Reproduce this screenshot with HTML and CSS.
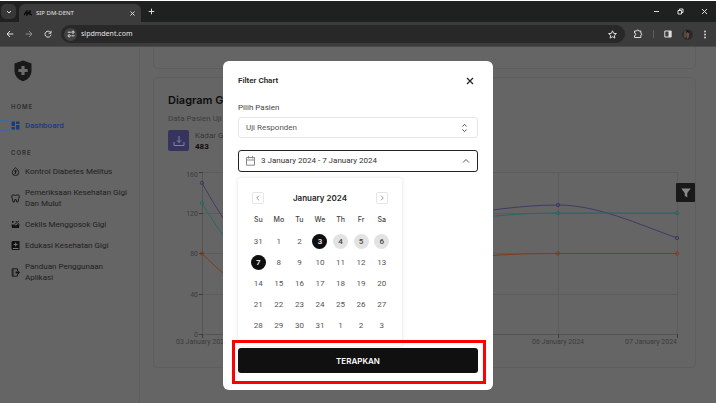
FILE: index.html
```html
<!DOCTYPE html>
<html lang="id">
<head>
<meta charset="utf-8">
<title>SIP DM-DENT</title>
<link rel="stylesheet" href="styles.css">
</head>
<body>
<header class="browser">
  <div class="tabbar">
    <button class="tabsearch" aria-label="Search tabs"><svg width="8" height="8" viewBox="0 0 8 8"><path d="M2 3l2 2 2-2" class="line"/></svg></button>
    <div class="tab">
      <svg class="favicon" width="8" height="6" viewBox="0 0 8 6"><path d="M0 5L3 1v4L6 1v4" fill="none" stroke="#0b0b0b" stroke-width="1.4"/><circle cx="7.3" cy="4.8" r=".7"/></svg>
      <span class="tabtitle">SIP DM-DENT</span>
      <button class="plain" aria-label="Close tab"><svg width="7" height="7" viewBox="0 0 7 7"><path d="M1.5 1.5l4 4m0-4l-4 4" class="line"/></svg></button>
    </div>
    <button class="plain newtab" aria-label="New tab"><svg width="7" height="7" viewBox="0 0 7 7"><path d="M3.5 .7v5.6M.7 3.5h5.6" class="line"/></svg></button>
    <div class="window">
      <button class="plain" aria-label="Minimize"><svg width="7" height="7" viewBox="0 0 7 7"><path d="M1 3.5h5" class="line"/></svg></button>
      <button class="plain" aria-label="Restore"><svg width="7" height="7" viewBox="0 0 7 7"><path d="M1 2.5h3.5V6H1zM2.5 2.5V1H6v3.5H4.5" class="line"/></svg></button>
      <button class="plain" aria-label="Close window"><svg width="7" height="7" viewBox="0 0 7 7"><path d="M1 1l5 5m0-5L1 6" class="line"/></svg></button>
    </div>
  </div>
  <div class="toolbar">
    <button class="plain" aria-label="Back"><svg width="8" height="8" viewBox="0 0 8 8"><path d="M7.3 4H1m3-3L1 4l3 3" class="line"/></svg></button>
    <button class="plain dim" aria-label="Forward"><svg width="8" height="8" viewBox="0 0 8 8"><path d="M.7 4H7M4 1l3 3-3 3" class="line"/></svg></button>
    <button class="plain" aria-label="Reload"><svg width="8" height="8" viewBox="0 0 8 8"><path d="M6.6 2.6A3 3 0 1 0 7 4.6M7 .8v2.4H4.6" class="line"/></svg></button>
    <label class="address">
      <span class="site"><svg width="8" height="8" viewBox="0 0 8 8"><path d="M.8 2.2h3M4.5 5.8h3" class="line"/><circle cx="6" cy="2.2" r="1.1" class="line"/><circle cx="2.2" cy="5.8" r="1.1" class="line"/></svg></span>
      <input type="text" value="sipdmdent.com" aria-label="Address">
      <svg width="9" height="9" viewBox="0 0 9 9"><path d="M4.5 .8l1.1 2.5 2.8.3-2.1 1.8.6 2.7-2.4-1.4-2.4 1.4.6-2.7L.6 3.6l2.8-.3z" class="line"/></svg>
    </label>
    <div class="tools">
      <button class="plain" aria-label="Extensions"><svg width="10" height="10" viewBox="0 0 10 10"><path d="M1.5 2h2.2a1 1 0 0 1 2 0h2.1v2.2a1 1 0 0 1 0 2v2.3H1.5V6.6a1.3 1.3 0 0 0 0-2.6z" class="line"/></svg></button>
      <i class="divider"></i>
      <button class="plain" aria-label="Side panel"><svg width="8" height="8" viewBox="0 0 8 8"><path d="M.8 1h6.4v6H.8z" class="line"/><path d="M4.5 1H7v6H4.5z" fill="#ddd"/></svg></button>
      <button class="plain" aria-label="Profile"><svg width="11" height="11" viewBox="0 0 11 11"><circle cx="5.5" cy="5.5" r="5.3" fill="#29282a"/><path d="M2.3 1.5L5 2 4 9 1.5 8.400z" fill="#454f4d"/><path d="M4.500 4q1.200-2 2.500 0v3L6 9.500H5L4.500 7z" fill="#7c4a3a"/><path d="M4 4.400q1.500-2.600 3 0V2.700Q5.500 1 4 2.700z" fill="#111"/></svg></button>
      <button class="plain" aria-label="Menu"><svg width="4" height="9" viewBox="0 0 4 9" fill="#ddd"><circle cx="2" cy="1.5" r=".9"/><circle cx="2" cy="4.5" r=".9"/><circle cx="2" cy="7.5" r=".9"/></svg></button>
    </div>
  </div>
</header>

<div class="app">
  <aside class="sidebar">
    <svg class="logo" width="18" height="22" viewBox="0 0 18 22"><path d="M9 .5l8.500 3v7.200c0 5-3.400 8.800-8.500 10.600C3.900 19.500.5 15.700.5 10.700V3.500z" fill="#191919"/><path d="M7.400 6h3.200v2.900h3v3.200h-3V15H7.400v-2.900h-3V8.900h3z" fill="#6b6b6b"/></svg>
    <h2>HOME</h2>
    <nav>
      <a href="#" class="active"><svg width="9" height="9" viewBox="0 0 9 9" fill="#183b80"><path d="M.5.5h3.500v4.500H.5zM.5 6h3.500v2.500H.5zM5 .5h3.500V3H5zM5 4h3.500v4.500H5z"/></svg><span>Dashboard</span></a>
    </nav>
    <h2 class="core">CORE</h2>
    <nav>
      <a href="#"><svg width="9" height="9" viewBox="0 0 9 9"><path d="M4.500.6C3 2.300 1.300 3.600 1.300 5.400a3.200 3.200 0 0 0 6.400 0C7.700 3.600 6 2.300 4.500.6z" class="ink"/><path d="M3.200 4h2.600M4.500 3v3.800M3.400 6.700l2-1.800" class="ink"/></svg><span>Kontrol Diabetes Melitus</span></a>
      <a href="#"><svg width="9" height="9" viewBox="0 0 9 9"><path d="M1 1.200q1.800-.8 3.500.3 1.700-1.100 3.500-.3.800 1.800-.4 3.700L7 8H5.700L5.200 5.600H3.800L3.300 8H2L1.400 4.900Q.2 3 1 1.200z" class="ink"/></svg><span>Pemeriksaan Kesehatan Gigi Dan Mulut</span></a>
      <a href="#"><svg width="9" height="9" viewBox="0 0 9 9"><path d="M.5 4.500h2l2 1 4-1.500-.5 4H1z" fill="#141414"/><path d="M3.500 4.500L7.800 1M1 2h2M1.500 1v2M5 2l.5-1M8 3.500l-2 1" class="ink"/></svg><span>Ceklis Menggosok Gigi</span></a>
      <a href="#"><svg width="9" height="9" viewBox="0 0 9 9"><path d="M1.500 0h7v9h-7L.5 8V1z" fill="#111"/><path d="M4.700 1.500v4M2.700 3.500h4M1.800 7.500h5.700" stroke="#777" fill="none"/></svg><span>Edukasi Kesehatan Gigi</span></a>
      <a href="#"><svg width="9" height="9" viewBox="0 0 9 9"><path d="M6.500 3V.8H1.200v7.400h5.300V6M2 1v7" class="ink"/><path d="M4.500 3.500H7V2.500l2 2-2 2V5.500H4.500z" fill="#141414"/></svg><span>Panduan Penggunaan Aplikasi</span></a>
    </nav>
  </aside>

  <main>
    <section class="card above"></section>
    <section class="card chart">
      <h1>Diagram Gula</h1>
      <p>Data Pasien Uji</p>
      <div class="stat">
        <span class="download"><svg width="12" height="12" viewBox="0 0 12 12"><path d="M1 7v3.500h10V7M6 1v6.500M3.800 5.300L6 7.500l2.200-2.200" fill="none" stroke="#85829a"/></svg></span>
        <div>Kadar Gula<strong>483</strong></div>
      </div>
      <svg class="plot" viewBox="0 0 541 186">
        <g fill="none" stroke="#5c5c5c">
          <path d="M48 10.500h476M48 51.500h476M48 91.500h476M48 132.500h476M167.500 10v162M286.500 10v162M404.500 10v162M523.500 10v162"/>
          <path d="M48.500 10.500v162M48 172.500h476" stroke="#545454"/>
          <path d="M45 10.500h4M45 51.500h4M45 91.500h4M45 132.500h4M45 172.500h4M48.500 172v4M404.500 172v4M523.500 172v4" stroke="#3c3c3c"/>
        </g>
        <g class="axis" text-anchor="end"><text x="44" y="15">160</text><text x="44" y="54">120</text><text x="44" y="94">80</text><text x="44" y="135">40</text><text x="44" y="175">0</text></g>
        <g class="axis" text-anchor="middle"><text x="48" y="182">03 January 2024</text><text x="404" y="182">06 January 2024</text><text x="497" y="182">07 January 2024</text></g>
        <g class="series" stroke="#3f3a66"><path d="M48 21C88 92 127 140 167 120S246 60 286 55S365 43 404 43S484 62 523 76"/><circle cx="48" cy="21" r="1.700"/><circle cx="404" cy="43" r="1.700"/><circle cx="523" cy="76" r="1.700"/></g>
        <g class="series" stroke="#2b6666"><path d="M48 41C88 108 127 145 167 120S246 65 286 60S365 51 404 51H523"/><circle cx="48" cy="41" r="1.700"/><circle cx="404" cy="51" r="1.700"/><circle cx="523" cy="51" r="1.700"/></g>
        <g class="series" stroke="#7d3d1c"><path d="M48 91.500C88 131 127 160 167 150S246 105 286 99S365 91.500 404 91.500H523"/><circle cx="48" cy="91.500" r="1.700"/><circle cx="404" cy="91.500" r="1.700"/><circle cx="523" cy="91.500" r="1.700"/></g>
      </svg>
      <button class="filter" aria-label="Filter"><svg width="10" height="10" viewBox="0 0 10 10"><path d="M.3.500h9.400L6.300 5v4.500L3.700 7.800V5z" fill="#888"/></svg></button>
    </section>
  </main>
</div>

<div class="overlay">
  <form class="dialog" role="dialog" aria-labelledby="dialog-title">
    <div class="head">
      <h2 id="dialog-title">Filter Chart</h2>
      <button type="button" class="plain" aria-label="Close"><svg width="8" height="8" viewBox="0 0 8 8"><path d="M1 1l6 6m0-6L1 7" fill="none" stroke="#222" stroke-width="1.200"/></svg></button>
    </div>
    <label class="caption" for="patient">Pilih Pasien</label>
    <div class="picker">
      <select id="patient"><option>Uji Responden</option></select>
      <svg width="7" height="10" viewBox="0 0 7 10"><path d="M1.300 3.500l2.200-2.200 2.200 2.200M1.300 6.500l2.200 2.200 2.200-2.200" fill="none" stroke="#555"/></svg>
    </div>
    <button type="button" class="range" aria-expanded="true">
      <svg width="9" height="10" viewBox="0 0 9 10"><path d="M.5 1.500h8v7.700h-8zM.5 4h8M2.500 0v2.500M6.500 0v2.500" fill="none" stroke="#888"/></svg>
      <span>3 January 2024 - 7 January 2024</span>
      <svg width="8" height="6" viewBox="0 0 8 6"><path d="M1 4.500l3-3 3 3" fill="none" stroke="#555"/></svg>
    </button>
    <div class="calendar">
      <div class="month">
        <button type="button" aria-label="Previous month"><svg width="6" height="6" viewBox="0 0 6 6"><path d="M4 .700L1.700 3 4 5.300" fill="none" stroke="#999"/></svg></button>
        <strong>January 2024</strong>
        <button type="button" aria-label="Next month"><svg width="6" height="6" viewBox="0 0 6 6"><path d="M2 .700L4.300 3 2 5.300" fill="none" stroke="#999"/></svg></button>
      </div>
      <table>
        <thead><tr><th>Su</th><th>Mo</th><th>Tu</th><th>We</th><th>Th</th><th>Fr</th><th>Sa</th></tr></thead>
        <tbody>
          <tr><td>31</td><td>1</td><td>2</td><td><b class="end">3</b></td><td><b>4</b></td><td><b>5</b></td><td><b>6</b></td></tr>
          <tr><td><b class="end">7</b></td><td>8</td><td>9</td><td>10</td><td>11</td><td>12</td><td>13</td></tr>
          <tr><td>14</td><td>15</td><td>16</td><td>17</td><td>18</td><td>19</td><td>20</td></tr>
          <tr><td>21</td><td>22</td><td>23</td><td>24</td><td>25</td><td>26</td><td>27</td></tr>
          <tr><td>28</td><td>29</td><td>30</td><td>31</td><td>1</td><td>2</td><td>3</td></tr>
        </tbody>
      </table>
    </div>
    <div class="submit"><button type="button" class="apply">TERAPKAN</button><i class="marker"></i></div>
  </form>
</div>
</body>
</html>
```

FILE: styles.css
```css
* { box-sizing: border-box; }
body { margin: 0; min-height: 100vh; display: flex; flex-direction: column; position: relative; overflow: hidden; background: #656565; font: 8px/10px Roboto, Inter, sans-serif; color: #262626; }
button, input, select { font: inherit; color: inherit; margin: 0; padding: 0; }
h1, h2, p { margin: 0; }
svg { display: block; flex: none; }
.plain { display: block; border: 0; background: none; }
.line { fill: none; stroke: #ddd; stroke-width: 1; }
.dim { opacity: .5; }

.browser { border-top: 1px solid #fff; background: #3c3c3c; color: #e3e3e3; font-family: "Noto Sans", sans-serif; font-size: 7px; border-bottom: 1px solid #4b4b4b; }
.tabbar { display: flex; align-items: center; height: 21px; background: #1f2120; }
.tabsearch { width: 15px; height: 15px; margin-left: 1px; border: 0; border-radius: 5px; background: #383838; display: grid; place-items: center; }
.tab { display: flex; align-items: center; gap: 4px; width: 122px; height: 18px; align-self: flex-end; margin-left: 3px; padding: 0 5px; border-radius: 6px 6px 0 0; background: #3c3c3c; }
.tabtitle { flex: 1; font-size: 6px; }
.newtab { margin-left: 7px; }
.window { display: flex; gap: 17px; margin-left: auto; padding-right: 8px; }
.toolbar { display: flex; align-items: center; height: 24px; padding: 0 9px 0 6px; gap: 11px; }
.address { flex: 1; display: flex; align-items: center; gap: 4px; height: 18px; margin-left: -2px; padding: 0 8px 0 3px; border-radius: 9px; background: #282828; }
.address input { flex: 1; min-width: 0; border: 0; background: none; outline: 0; }
.site { width: 13px; height: 13px; border-radius: 50%; background: #414141; display: grid; place-items: center; }
.tools { display: flex; align-items: center; gap: 10px; margin-left: -3px; }
.divider { width: 1px; height: 8px; background: #606060; }

.app { flex: 1; display: grid; grid-template-columns: 140px 1fr; }
.sidebar { padding: 13px 11px 0; border-right: 1px solid #5d5d5d; }
.logo { margin-left: 3px; }
.sidebar h2 { margin-top: 20px; font: 600 6px/10px Inter, sans-serif; letter-spacing: 1px; color: #2d2d2d; }
.sidebar h2.core { margin-top: 17px; }
.sidebar nav { display: flex; flex-direction: column; gap: 10px; margin-top: 8px; }
.sidebar a { display: flex; align-items: center; gap: 5px; font-weight: 400; line-height: 11px; color: #1e1e1e; text-decoration: none; }
.sidebar a.active { font-weight: 500; color: #183b80; box-shadow: -12px 0 0 -1px #656565, -12px 0 0 0 #4c6694; }
.ink { fill: none; stroke: #1c1c1c; }
main { padding: 0 20px 0 13px; }
.card { position: relative; border: 1px solid #5e5e5e; border-radius: 5px; }
.above { height: 22px; border-top: 0; border-radius: 0 0 5px 5px; }
.chart { margin-top: 8px; padding: 15px 0 19px; }
.chart h1 { padding-left: 14px; font: 600 11px/14px Inter, sans-serif; color: #0d0d0d; }
.chart p { margin-top: 7px; padding-left: 14px; color: #3c3c3c; }
.stat { display: flex; gap: 6px; margin-top: 6px; padding-left: 14px; line-height: 11px; color: #353535; }
.stat strong { display: block; color: #0d0d0d; }
.download { width: 21px; height: 21px; border-radius: 2px; background: #37335f; display: grid; place-items: center; }
.plot { width: 100%; margin-top: 10px; }
.axis { font-size: 7px; fill: #3c3c3c; }
.series { fill: none; stroke-width: 1; }
.filter { position: absolute; right: 0; top: 105px; width: 19px; height: 19px; border: 0; border-radius: 1px; background: #191919; display: grid; place-items: center; }

.overlay { position: absolute; inset: 0; display: flex; justify-content: center; align-items: flex-start; padding-top: 61px; }
.dialog { width: 270px; padding: 15px 15px 17px; border-radius: 6px; background: #fff; }
.head { display: flex; justify-content: space-between; align-items: center; height: 10px; padding-right: 4px; }
.head h2 { font-size: 8px; line-height: 10px; font-weight: 600; }
.caption { display: block; margin: 17px 0 4px; color: #444; }
.picker { display: grid; align-items: center; }
.picker > * { grid-area: 1 / 1; }
.picker svg { justify-self: end; margin-right: 10px; pointer-events: none; }
.picker select { appearance: none; width: 100%; height: 21px; padding: 0 7px; border: 1px solid #e6e6e6; border-radius: 3px; background: #fff; color: #555; }
.range { display: flex; align-items: center; gap: 6px; width: 100%; height: 22px; margin-top: 12px; padding: 0 7px; border: 1px solid #222; border-radius: 3px; background: #fff; color: #333; }
.range span { flex: 1; text-align: left; }
.calendar { width: 164px; margin-top: 6px; padding: 14px 10px 10px; border-radius: 3px; box-shadow: 0 0 4px rgba(0, 0, 0, .12); }
.month { display: flex; justify-content: space-between; align-items: center; height: 12px; padding: 0 4px; }
.month button { width: 12px; height: 12px; border: 1px solid #e6e6e6; border-radius: 2px; background: #fff; display: grid; place-items: center; }
.month strong { font: 600 8px/10px Inter, sans-serif; }
table { width: 100%; table-layout: fixed; border-collapse: collapse; margin-top: 4px; }
th, td { height: 21px; padding: 0; text-align: center; vertical-align: middle; }
thead th { height: 23px; font: 500 7px/10px Inter, sans-serif; color: #444; }
td { color: #555; }
td b { display: block; width: 15px; margin: 0 auto; border-radius: 50%; line-height: 15px; font-weight: 500; background: #e2e2e2; color: #444; }
td .end { background: #0f0f0f; color: #fff; }
.submit { position: relative; margin-top: 2px; }
.apply { display: block; width: 100%; height: 25px; border: 0; border-radius: 3px; background: #101010; color: #fff; font: 600 8px/10px Inter, sans-serif; }
.marker { position: absolute; inset: -8px -8px -11px -6px; border: 3px solid #f00; pointer-events: none; }
```
